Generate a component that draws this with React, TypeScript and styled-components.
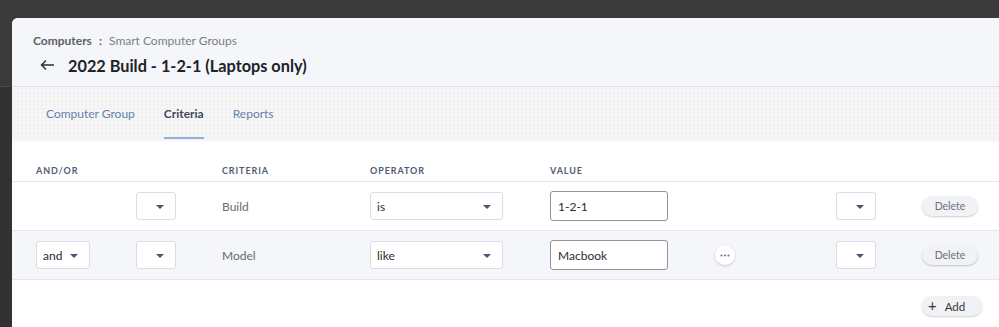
import React from "react";
import styled, { createGlobalStyle } from "styled-components";

const GlobalStyle = createGlobalStyle`
  html, body {
    margin: 0;
    padding: 0;
  }
  body {
    background: linear-gradient(to bottom, #3a3a3a 0, #3a3a3a 86px, #4a4a4a 86px, #4a4a4a 87px, #323232 87px);
    font-family: Lato, "Noto Sans", Arial, sans-serif;
    -webkit-font-smoothing: antialiased;
  }
  * { box-sizing: border-box; }
`;

const Page = styled.div`
  width: 999px;
  height: 327px;
  overflow: hidden;
  padding: 18px 0 0 12px;
`;

const Panel = styled.div`
  background: #ffffff;
  border-top-left-radius: 6px;
  overflow: hidden;
  height: 320px;
`;

const Header = styled.div`
  background: #f4f6fa;
  height: 69px;
  border-bottom: 1px solid #dde1e8;
  padding: 15px 0 0 21px;
`;

const Breadcrumb = styled.div`
  display: flex;
  align-items: center;
  font-size: 12px;
  color: #7b7e84;
  line-height: 16px;
`;

const CrumbStrong = styled.span`
  font-weight: 700;
  color: #5d6067;
`;

const CrumbSep = styled.span`
  font-weight: 700;
  color: #5d6067;
  margin: 0 7px 0 7px;
`;

const TitleRow = styled.div`
  display: flex;
  align-items: center;
  margin-top: 5px;
  padding-left: 7px;
  height: 22px;
`;

const BackArrow = styled.svg`
  width: 15px;
  height: 12px;
  margin-right: 13px;
  flex: none;
`;

const Title = styled.h1`
  margin: 0;
  font-size: 16.3px;
  font-weight: 700;
  color: #202226;
`;

const TabBar = styled.div`
  height: 52px;
  background-color: #f6f6f7;
  background-image: radial-gradient(circle, #f0f0f1 0.9px, transparent 1.3px);
  background-size: 4px 4px;
  display: flex;
  gap: 29px;
  padding-left: 34px;
  box-shadow: 0 2px 3px rgba(0, 0, 0, 0.06);
  position: relative;
`;

const Tab = styled.div<{ $active?: boolean }>`
  height: 100%;
  display: flex;
  align-items: center;
  font-size: 12px;
  color: ${(p) => (p.$active ? "#3c4862" : "#6481ad")};
  font-weight: ${(p) => (p.$active ? 700 : 400)};
  border-bottom: 2px solid ${(p) => (p.$active ? "#90b0d9" : "transparent")};
  padding-top: 2px;
`;

const Content = styled.div`
  padding: 0 0 0 24px;
`;

const COLS = "100px 86px 148px 180px 165px 121px 86px 1fr";

const HeadRow = styled.div`
  display: grid;
  grid-template-columns: ${COLS};
  height: 43px;
  padding-top: 20px;
  align-items: center;
  border-bottom: 1px solid #e4e7ec;
  margin-left: -24px;
  padding-left: 24px;
`;

const HeadCell = styled.div`
  font-size: 9px;
  font-weight: 700;
  letter-spacing: 0.9px;
  color: #505c75;
`;

const Row = styled.div<{ $shaded?: boolean }>`
  display: grid;
  grid-template-columns: ${COLS};
  height: 49px;
  align-items: center;
  border-bottom: 1px solid #e4e7ec;
  background: ${(p) => (p.$shaded ? "#f4f6fa" : "#ffffff")};
  margin-left: -24px;
  padding-left: 24px;
`;

const Cell = styled.div`
  display: flex;
  align-items: center;
`;

const Select = styled.div<{ $w: number }>`
  width: ${(p) => p.$w}px;
  height: 28px;
  background: #ffffff;
  border: 1px solid #dadde3;
  border-radius: 3px;
  display: flex;
  align-items: center;
  padding-left: 6px;
  position: relative;
  font-size: 12px;
  color: #2b2d31;
  overflow: hidden;
`;

const SelectText = styled.span`
  display: block;
  white-space: nowrap;
`;

const Caret = styled.span<{ $right: number }>`
  position: absolute;
  right: ${(p) => p.$right}px;
  top: 12px;
  width: 0;
  height: 0;
  border-left: 4px solid transparent;
  border-right: 4px solid transparent;
  border-top: 4px solid #4b5573;
`;

const Criteria = styled.span`
  font-size: 12px;
  color: #67696e;
`;

const ValueInput = styled.div`
  width: 118px;
  height: 30px;
  border: 1px solid #8f939b;
  border-radius: 3px;
  background: #ffffff;
  display: flex;
  align-items: center;
  padding-left: 7px;
  font-size: 12px;
  color: #2b2d31;
`;

const DotsButton = styled.div`
  width: 20px;
  height: 20px;
  border-radius: 50%;
  background: #ffffff;
  box-shadow: 0 1px 3px rgba(0, 0, 0, 0.18);
  display: flex;
  align-items: center;
  justify-content: center;
`;

const PillButton = styled.div<{ $w: number }>`
  width: ${(p) => p.$w}px;
  height: 20px;
  border-radius: 10px;
  background: #f1f2f5;
  box-shadow: 0 1px 2px rgba(0, 0, 0, 0.2);
  display: flex;
  align-items: center;
  justify-content: center;
  font-size: 10.5px;
  color: #6d717a;
`;

const AddButton = styled(PillButton)`
  color: #34363b;
  font-size: 11.5px;
  justify-content: flex-start;
  gap: 8px;
  padding-left: 6px;
`;

const Plus = styled.span`
  font-size: 15px;
  line-height: 1;
  color: #34363b;
  margin-top: -2px;
`;

const AddRow = styled.div`
  display: grid;
  grid-template-columns: ${COLS};
  padding-top: 16px;
`;

const AddCell = styled.div`
  grid-column: 8;
`;

const Dots = () => (
  <svg width="10" height="3" viewBox="0 0 10 3">
    <circle cx="1.5" cy="1.5" r="1.1" fill="#757982" />
    <circle cx="5" cy="1.5" r="1.1" fill="#757982" />
    <circle cx="8.5" cy="1.5" r="1.1" fill="#757982" />
  </svg>
);

export default function App() {
  return (
    <>
      <GlobalStyle />
      <Page>
        <Panel>
          <Header>
            <Breadcrumb>
              <CrumbStrong>Computers</CrumbStrong>
              <CrumbSep>:</CrumbSep>
              <span>Smart Computer Groups</span>
            </Breadcrumb>
            <TitleRow>
              <BackArrow viewBox="0 0 15 12">
                <path d="M14 6H1.5M6 1.5L1.5 6L6 10.5" fill="none" stroke="#2a2c30" strokeWidth="1.4" />
              </BackArrow>
              <Title>2022 Build - 1-2-1 (Laptops only)</Title>
            </TitleRow>
          </Header>
          <TabBar>
            <Tab>Computer Group</Tab>
            <Tab $active>Criteria</Tab>
            <Tab>Reports</Tab>
          </TabBar>
          <Content>
            <HeadRow>
              <HeadCell>AND/OR</HeadCell>
              <HeadCell />
              <HeadCell>CRITERIA</HeadCell>
              <HeadCell>OPERATOR</HeadCell>
              <HeadCell>VALUE</HeadCell>
              <HeadCell />
              <HeadCell />
              <HeadCell />
            </HeadRow>
            <Row>
              <Cell />
              <Cell>
                <Select $w={40}>
                  <Caret $right={11} />
                </Select>
              </Cell>
              <Cell>
                <Criteria>Build</Criteria>
              </Cell>
              <Cell>
                <Select $w={133}>
                  <SelectText>is</SelectText>
                  <Caret $right={11} />
                </Select>
              </Cell>
              <Cell>
                <ValueInput>1-2-1</ValueInput>
              </Cell>
              <Cell />
              <Cell>
                <Select $w={40}>
                  <Caret $right={11} />
                </Select>
              </Cell>
              <Cell>
                <PillButton $w={56}>Delete</PillButton>
              </Cell>
            </Row>
            <Row $shaded>
              <Cell>
                <Select $w={54}>
                  <SelectText>and</SelectText>
                  <Caret $right={11} />
                </Select>
              </Cell>
              <Cell>
                <Select $w={40}>
                  <Caret $right={11} />
                </Select>
              </Cell>
              <Cell>
                <Criteria>Model</Criteria>
              </Cell>
              <Cell>
                <Select $w={133}>
                  <SelectText>like</SelectText>
                  <Caret $right={11} />
                </Select>
              </Cell>
              <Cell>
                <ValueInput>Macbook</ValueInput>
              </Cell>
              <Cell>
                <DotsButton>
                  <Dots />
                </DotsButton>
              </Cell>
              <Cell>
                <Select $w={40}>
                  <Caret $right={11} />
                </Select>
              </Cell>
              <Cell>
                <PillButton $w={56}>Delete</PillButton>
              </Cell>
            </Row>
            <AddRow>
              <AddCell>
                <AddButton $w={60}>
                  <Plus>+</Plus>
                  <span>Add</span>
                </AddButton>
              </AddCell>
            </AddRow>
          </Content>
        </Panel>
      </Page>
    </>
  );
}
